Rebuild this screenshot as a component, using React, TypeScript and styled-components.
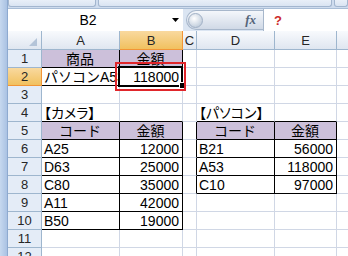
import React from "react";
import styled, { createGlobalStyle } from "styled-components";

const GlobalStyle = createGlobalStyle`
  html, body { margin: 0; padding: 0; background: #ffffff; }
  #root { width: 348px; height: 256px; overflow: hidden; }
`;

const Window = styled.div`
  display: flex;
  width: 348px;
  height: 256px;
  overflow: hidden;
  font-family: "Liberation Sans", "Noto Sans CJK JP", sans-serif;
  color: #000;
`;

const FrameEdge = styled.div`
  flex: none;
  width: 8px;
  box-sizing: border-box;
  background: linear-gradient(to right, #c6d8ef, #aac2e3);
  border-right: 1px solid #8eaad0;
`;

const Main = styled.div`
  flex: 1;
  min-width: 0;
  display: flex;
  flex-direction: column;
  overflow: hidden;
`;

const RibbonEdge = styled.div`
  flex: none;
  height: 8px;
  display: flex;
  gap: 2px;
  background: #cfdcee;
`;

const RibbonTab = styled.div<{ $w?: number }>`
  flex: ${(p) => (p.$w ? "none" : "1")};
  width: ${(p) => (p.$w ? `${p.$w}px` : "auto")};
  height: 7px;
  box-sizing: border-box;
  border: 1px solid #a3b6cf;
  border-top: none;
  border-radius: 0 0 3px 3px;
  background: linear-gradient(#e9eff8, #dae4f2);
`;

const FormulaBar = styled.div`
  flex: none;
  height: 23px;
  display: flex;
  align-items: stretch;
  box-sizing: border-box;
  background: #dbe5f2;
  border-top: 1px solid #a9bdd6;
`;

const NameBox = styled.div`
  flex: none;
  width: 175px;
  display: flex;
  align-items: center;
  background: #ffffff;
`;

const NameText = styled.div`
  flex: 1;
  text-align: center;
  font-size: 14px;
  line-height: 22px;
`;

const NameArrow = styled.div`
  flex: none;
  width: 15px;
  display: flex;
  justify-content: center;
  align-items: center;
`;

const FxPill = styled.div`
  flex: none;
  margin-left: 3px;
  width: 77px;
  height: 20px;
  align-self: center;
  box-sizing: border-box;
  border: 1px solid #a7b7cb;
  border-right: none;
  border-radius: 10px 0 0 10px;
  background: linear-gradient(#f4f7fb, #d0d9e6);
  display: flex;
  align-items: center;
  justify-content: space-between;
  padding: 0 7px 0 1px;
`;

const Knob = styled.div`
  width: 15px;
  height: 15px;
  box-sizing: border-box;
  border-radius: 50%;
  background: radial-gradient(circle at 40% 35%, #ffffff, #c3cfdd 75%);
  border: 1px solid #a0b0c5;
`;

const FxLabel = styled.span`
  font-family: "Liberation Serif", serif;
  font-style: italic;
  font-weight: bold;
  font-size: 13px;
  color: #55657a;
`;

const FormulaInput = styled.div`
  flex: 1;
  background: #ffffff;
  display: flex;
  align-items: center;
  padding-left: 10px;
  border-left: 1px solid #a7b7cb;
`;

const Unknown = styled.span`
  color: #cc2a2a;
  font-weight: bold;
  font-size: 13px;
`;

const Sheet = styled.div`
  display: grid;
  grid-template-columns: 34px 78px 63px 14px 78px 62px 64px;
  grid-template-rows: 19px;
  grid-auto-rows: 18px;
`;

const Corner = styled.div`
  position: relative;
  box-sizing: border-box;
  border-right: 1px solid #9eb6ce;
  border-bottom: 1px solid #9eb6ce;
  background: linear-gradient(#f8fafd, #dfe6f0);
  display: flex;
  justify-content: flex-end;
  align-items: flex-end;
  padding: 0 4px 3px 0;
`;

const ColHead = styled.div<{ $sel?: boolean }>`
  box-sizing: border-box;
  border-right: 1px solid ${(p) => (p.$sel ? "#f29536" : "#9eb6ce")};
  border-bottom: 1px solid ${(p) => (p.$sel ? "#f29536" : "#9eb6ce")};
  background: ${(p) =>
    p.$sel ? "linear-gradient(#f9d99f, #f1c15f)" : "linear-gradient(#f8fafd, #dfe6f0)"};
  text-align: center;
  font-size: 13px;
  line-height: 19px;
  color: #262626;
  overflow: hidden;
`;

const RowHead = styled.div<{ $sel?: boolean }>`
  box-sizing: border-box;
  border-right: 1px solid ${(p) => (p.$sel ? "#f29536" : "#9eb6ce")};
  border-bottom: 1px solid ${(p) => (p.$sel ? "#f29536" : "#9eb6ce")};
  background: ${(p) => (p.$sel ? "linear-gradient(#f9d99f, #f1c15f)" : "#e4ecf7")};
  text-align: center;
  font-size: 13px;
  line-height: 18px;
  color: #262626;
  overflow: hidden;
`;

const Cell = styled.div<{
  $bg?: string;
  $align: "left" | "center" | "right";
  $br?: boolean;
  $bb?: boolean;
  $palt?: boolean;
  $open?: boolean;
}>`
  position: relative;
  box-sizing: border-box;
  border-right: 1px solid ${(p) => (p.$br ? "#000000" : "#d0d7e5")};
  border-bottom: 1px solid ${(p) => (p.$bb ? "#000000" : "#d0d7e5")};
  background: ${(p) => p.$bg || "#ffffff"};
  font-size: 14px;
  line-height: 17px;
  padding: 1px 3px 0 2px;
  text-align: ${(p) => p.$align};
  white-space: nowrap;
  overflow: ${(p) => (p.$open ? "visible" : "hidden")};
  font-feature-settings: ${(p) => (p.$palt ? '"palt"' : "normal")};
`;

const Selection = styled.div`
  position: absolute;
  z-index: 2;
  top: -2px;
  left: -2px;
  right: -1px;
  bottom: -2px;
  border: 2px solid #000000;
  pointer-events: none;
`;

const FillHandle = styled.div`
  position: absolute;
  z-index: 3;
  right: -4px;
  bottom: -4px;
  width: 5px;
  height: 5px;
  background: #000000;
  border: 1px solid #ffffff;
`;

const Callout = styled.div`
  position: absolute;
  z-index: 4;
  top: -6px;
  left: -5px;
  right: -4px;
  bottom: -6px;
  border: 2px solid #e0262b;
  pointer-events: none;
`;

type CellData = { text: string; align: "left" | "center" | "right"; bg?: string; palt?: boolean };

const PURPLE = "#ccc0da";
const COLS = ["A", "B", "C", "D", "E", "F"];
const ROWS = 12;

const data: Record<string, CellData> = {
  A1: { text: "商品", align: "center", bg: PURPLE },
  B1: { text: "金額", align: "center", bg: PURPLE },
  A2: { text: "パソコンA53", align: "left" },
  B2: { text: "118000", align: "right" },
  A4: { text: "【カメラ】", align: "left", palt: true },
  A5: { text: "コード", align: "center", bg: PURPLE },
  B5: { text: "金額", align: "center", bg: PURPLE },
  A6: { text: "A25", align: "left" },
  B6: { text: "12000", align: "right" },
  A7: { text: "D63", align: "left" },
  B7: { text: "25000", align: "right" },
  A8: { text: "C80", align: "left" },
  B8: { text: "35000", align: "right" },
  A9: { text: "A11", align: "left" },
  B9: { text: "42000", align: "right" },
  A10: { text: "B50", align: "left" },
  B10: { text: "19000", align: "right" },
  D4: { text: "【パソコン】", align: "left", palt: true },
  D5: { text: "コード", align: "center", bg: PURPLE },
  E5: { text: "金額", align: "center", bg: PURPLE },
  D6: { text: "B21", align: "left" },
  E6: { text: "56000", align: "right" },
  D7: { text: "A53", align: "left" },
  E7: { text: "118000", align: "right" },
  D8: { text: "C10", align: "left" },
  E8: { text: "97000", align: "right" },
};

const tables = [
  { r0: 1, r1: 2, c0: 0, c1: 1 },
  { r0: 5, r1: 10, c0: 0, c1: 1 },
  { r0: 5, r1: 8, c0: 3, c1: 4 },
];

const inTable = (r: number, c: number) =>
  tables.some((t) => r >= t.r0 && r <= t.r1 && c >= t.c0 && c <= t.c1);

const SEL_COL = 1;
const SEL_ROW = 2;

export default function App() {
  const rows = [];
  for (let r = 1; r <= ROWS; r++) {
    rows.push(
      <RowHead key={`h${r}`} $sel={r === SEL_ROW}>
        {r}
      </RowHead>
    );
    COLS.forEach((col, c) => {
      const d = data[`${col}${r}`];
      const isSel = r === SEL_ROW && c === SEL_COL;
      rows.push(
        <Cell
          key={`${col}${r}`}
          $bg={d?.bg}
          $align={d?.align || "left"}
          $br={inTable(r, c) || inTable(r, c + 1)}
          $bb={inTable(r, c) || inTable(r + 1, c)}
          $palt={d?.palt}
          $open={isSel}
        >
          {d?.text}
          {isSel && (
            <>
              <Selection />
              <FillHandle />
              <Callout />
            </>
          )}
        </Cell>
      );
    });
  }

  return (
    <>
      <GlobalStyle />
      <Window>
        <FrameEdge />
        <Main>
          <RibbonEdge>
            <RibbonTab $w={88} />
            <RibbonTab />
            <RibbonTab $w={14} />
          </RibbonEdge>
          <FormulaBar>
            <NameBox>
              <NameText>B2</NameText>
              <NameArrow>
                <svg width="7" height="4" viewBox="0 0 7 4">
                  <polygon points="0,0 7,0 3.5,4" fill="#000" />
                </svg>
              </NameArrow>
            </NameBox>
            <FxPill>
              <Knob />
              <FxLabel>fx</FxLabel>
            </FxPill>
            <FormulaInput>
              <Unknown>?</Unknown>
            </FormulaInput>
          </FormulaBar>
          <Sheet>
            <Corner>
              <svg width="8" height="8" viewBox="0 0 8 8">
                <polygon points="8,0 8,8 0,8" fill="#b4c4d8" />
              </svg>
            </Corner>
            {COLS.map((col, c) => (
              <ColHead key={col} $sel={c === SEL_COL}>
                {col}
              </ColHead>
            ))}
            {rows}
          </Sheet>
        </Main>
      </Window>
    </>
  );
}
